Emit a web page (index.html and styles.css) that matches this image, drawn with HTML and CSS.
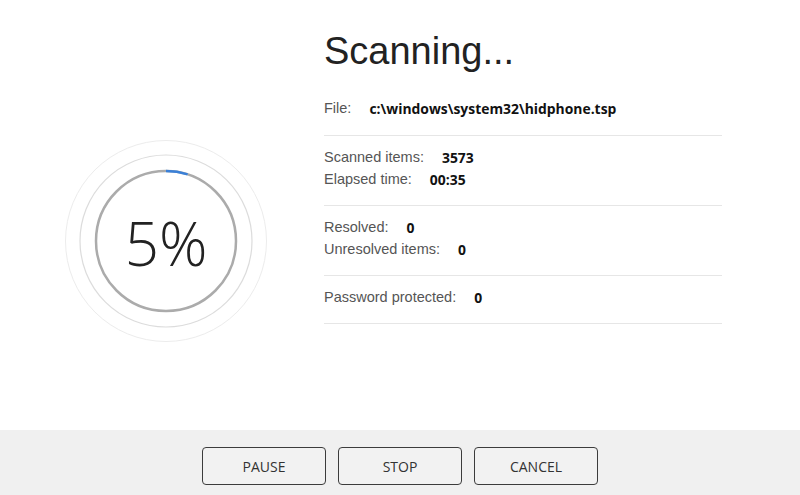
FILE: index.html
```html
<!DOCTYPE html>
<html lang="en">
<head>
  <meta charset="UTF-8" />
  <meta name="viewport" content="width=device-width, initial-scale=1.0"/>
  <title>Scanning</title>
  <link rel="stylesheet" href="styles.css">
</head>
<body>
  <div class="main">
    <div class="progress">
      <svg class="rings" width="202" height="202" viewBox="0 0 202 202">
        <circle cx="101" cy="101" r="100.5" fill="none" stroke="#ececec" stroke-width="1"/>
        <circle cx="101" cy="101" r="86" fill="none" stroke="#dcdcdc" stroke-width="1.2"/>
        <circle cx="101" cy="101" r="70" fill="none" stroke="#ababab" stroke-width="2.5"/>
        <!-- 5% of the ring, starting at the top -->
        <path d="M101 31 A70 70 0 0 1 122.6 34.4" fill="none" stroke="#3a80d8" stroke-width="2.5"/>
      </svg>
      <div class="percent">5%</div>
    </div>

    <div class="details">
      <h1>Scanning...</h1>
      <div class="section first">
        <div class="row"><span class="label">File:</span><b>c:\windows\system32\hidphone.tsp</b></div>
      </div>
      <div class="section">
        <div class="row"><span class="label">Scanned items:</span><b>3573</b></div>
        <div class="row"><span class="label">Elapsed time:</span><b>00:35</b></div>
      </div>
      <div class="section">
        <div class="row"><span class="label">Resolved:</span><b>0</b></div>
        <div class="row"><span class="label">Unresolved items:</span><b>0</b></div>
      </div>
      <div class="section">
        <div class="row"><span class="label">Password protected:</span><b>0</b></div>
      </div>
    </div>
  </div>

  <div class="footer">
    <button>PAUSE</button>
    <button>STOP</button>
    <button>CANCEL</button>
  </div>
</body>
</html>
```

FILE: styles.css
```css
body { margin: 0; font-family: "Liberation Sans", Arial, sans-serif; background: #fff; height: 495px; display: flex; flex-direction: column; overflow: hidden;}
.main { flex: 1; display: flex; align-items: flex-start; gap: 57px; padding: 29px 0 0 65px;}

.progress { display: grid; width: 202px; height: 202px; margin-top: 111px; place-items: center;}
.progress > * { grid-area: 1 / 1;}
.percent { font-family: "Open Sans", sans-serif; font-weight: 300; font-size: 60px; color: #222; line-height: 1; margin-top: 4px;}

.details { width: 398px;}
.details h1 { margin: 0 0 24px; font-weight: normal; font-size: 38px; line-height: 44px; color: #222;}
.section { padding: 10px 0 15px; border-bottom: 1px solid #e6e6e6;}
.section.first { padding: 0 0 16px;}
.row { display: flex; align-items: center; height: 22px; font-size: 14.5px; color: #555;}
.label { margin-right: 18px;}
.row b { font-family: "Open Sans", sans-serif; font-size: 13.9px; color: #111;}

.footer { height: 65px; box-sizing: border-box; padding-top: 17px; background: #f0f0f0; display: flex; justify-content: center; gap: 12px;}
.footer button { width: 124px; height: 38px; background: #f2f2f2; border: 1px solid #3c3c3c; border-radius: 4px; font-family: "Open Sans", sans-serif; font-size: 14px; color: #333;}
```
